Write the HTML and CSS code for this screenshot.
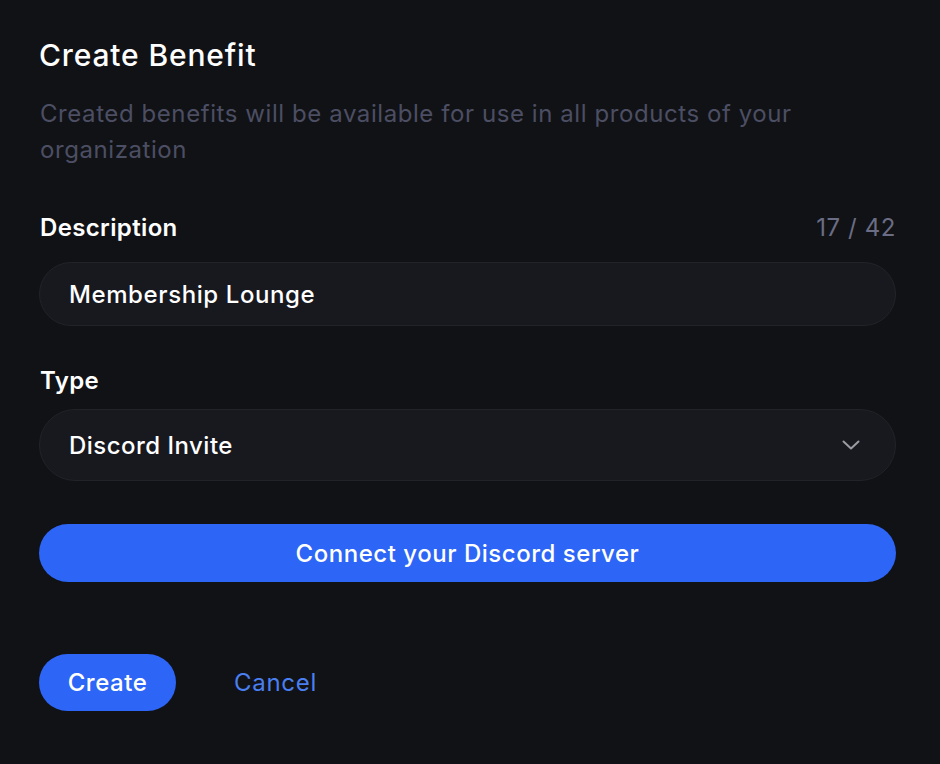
FILE: index.html
```html
<!DOCTYPE html>
<html lang="en">
<head>
<meta charset="utf-8">
<title>Create Benefit</title>
<link rel="stylesheet" href="styles.css">
</head>
<body>
<main class="panel">
  <h1 class="title">Create Benefit</h1>
  <p class="subtitle">Created benefits will be available for use in all products of your organization</p>

  <div class="field field-desc">
    <div class="label-row">
      <label class="label" for="desc">Description</label>
      <span class="counter">17 / 42</span>
    </div>
    <div class="input">Membership Lounge</div>
  </div>

  <div class="field field-type">
    <div class="label-row">
      <span class="label">Type</span>
    </div>
    <div class="select">
      <span>Discord Invite</span>
      <svg class="chevron" width="18" height="10" viewBox="0 0 18 10" fill="none">
        <path d="M1.5 1.5 L9 8.5 L16.5 1.5" stroke="#9b9ba3" stroke-width="2" stroke-linecap="round" stroke-linejoin="round"/>
      </svg>
    </div>
  </div>

  <button class="btn btn-wide">Connect your Discord server</button>

  <div class="actions">
    <button class="btn btn-create">Create</button>
    <button class="btn-link">Cancel</button>
  </div>
</main>
</body>
</html>
```
FILE: styles.css
```css
* { box-sizing: border-box; }
html, body { margin: 0; padding: 0; }
body {
  background: #111216;
  font-family: Inter, "Noto Sans", sans-serif;
  letter-spacing: 0.022em;
  color: #ffffff;
  width: 940px;
  height: 764px;
  overflow: hidden;
}
.panel {
  display: flex;
  flex-direction: column;
  padding: 37px 44px 0 39px;
}
.title {
  margin: 0;
  font-size: 30px;
  line-height: 36px;
  font-weight: 500;
  letter-spacing: 0.028em;
  color: #ffffff;
}
.subtitle {
  margin: 23px 0 0 0;
  font-size: 24px;
  line-height: 36px;
  font-weight: 400;
  letter-spacing: 0.024em;
  color: #4c4e63;
  padding-left: 1px;
}
.field { display: flex; flex-direction: column; }
.field-desc { margin-top: 42px; }
.field-type { margin-top: 37px; }
.label-row {
  display: flex;
  justify-content: space-between;
  align-items: baseline;
  padding-left: 1px;
}
.label {
  font-size: 24px;
  line-height: 36px;
  font-weight: 600;
  color: #ffffff;
}
.counter {
  font-size: 24px;
  line-height: 36px;
  font-weight: 400;
  letter-spacing: 0.025em;
  color: #6a6d84;
}
.input, .select {
  border: 1px solid #222329;
  background: #18191f;
  border-radius: 999px;
  font-size: 24px;
  font-weight: 500;
  color: #ffffff;
  display: flex;
  align-items: center;
  padding: 0 29px;
}
.input {
  height: 64px;
  margin-top: 16px;
  letter-spacing: 0.025em;
}
.select {
  height: 72px;
  margin-top: 10px;
  justify-content: space-between;
  padding-right: 35px;
  letter-spacing: 0.02em;
}
.chevron { display: block; }
.btn {
  border: none;
  border-radius: 999px;
  background: #2d65f6;
  color: #ffffff;
  font-family: inherit;
  letter-spacing: 0.022em;
  font-size: 24px;
  font-weight: 500;
  cursor: pointer;
}
.btn-wide {
  height: 58px;
  margin-top: 43px;
  width: 100%;
}
.actions {
  display: flex;
  align-items: center;
  gap: 58px;
  margin-top: 72px;
}
.btn-create {
  height: 57px;
  width: 137px;
}
.btn-link {
  border: none;
  background: none;
  padding: 0;
  font-family: inherit;
  letter-spacing: 0.03em;
  font-size: 24px;
  font-weight: 400;
  color: #4a7ff1;
  cursor: pointer;
}
```
